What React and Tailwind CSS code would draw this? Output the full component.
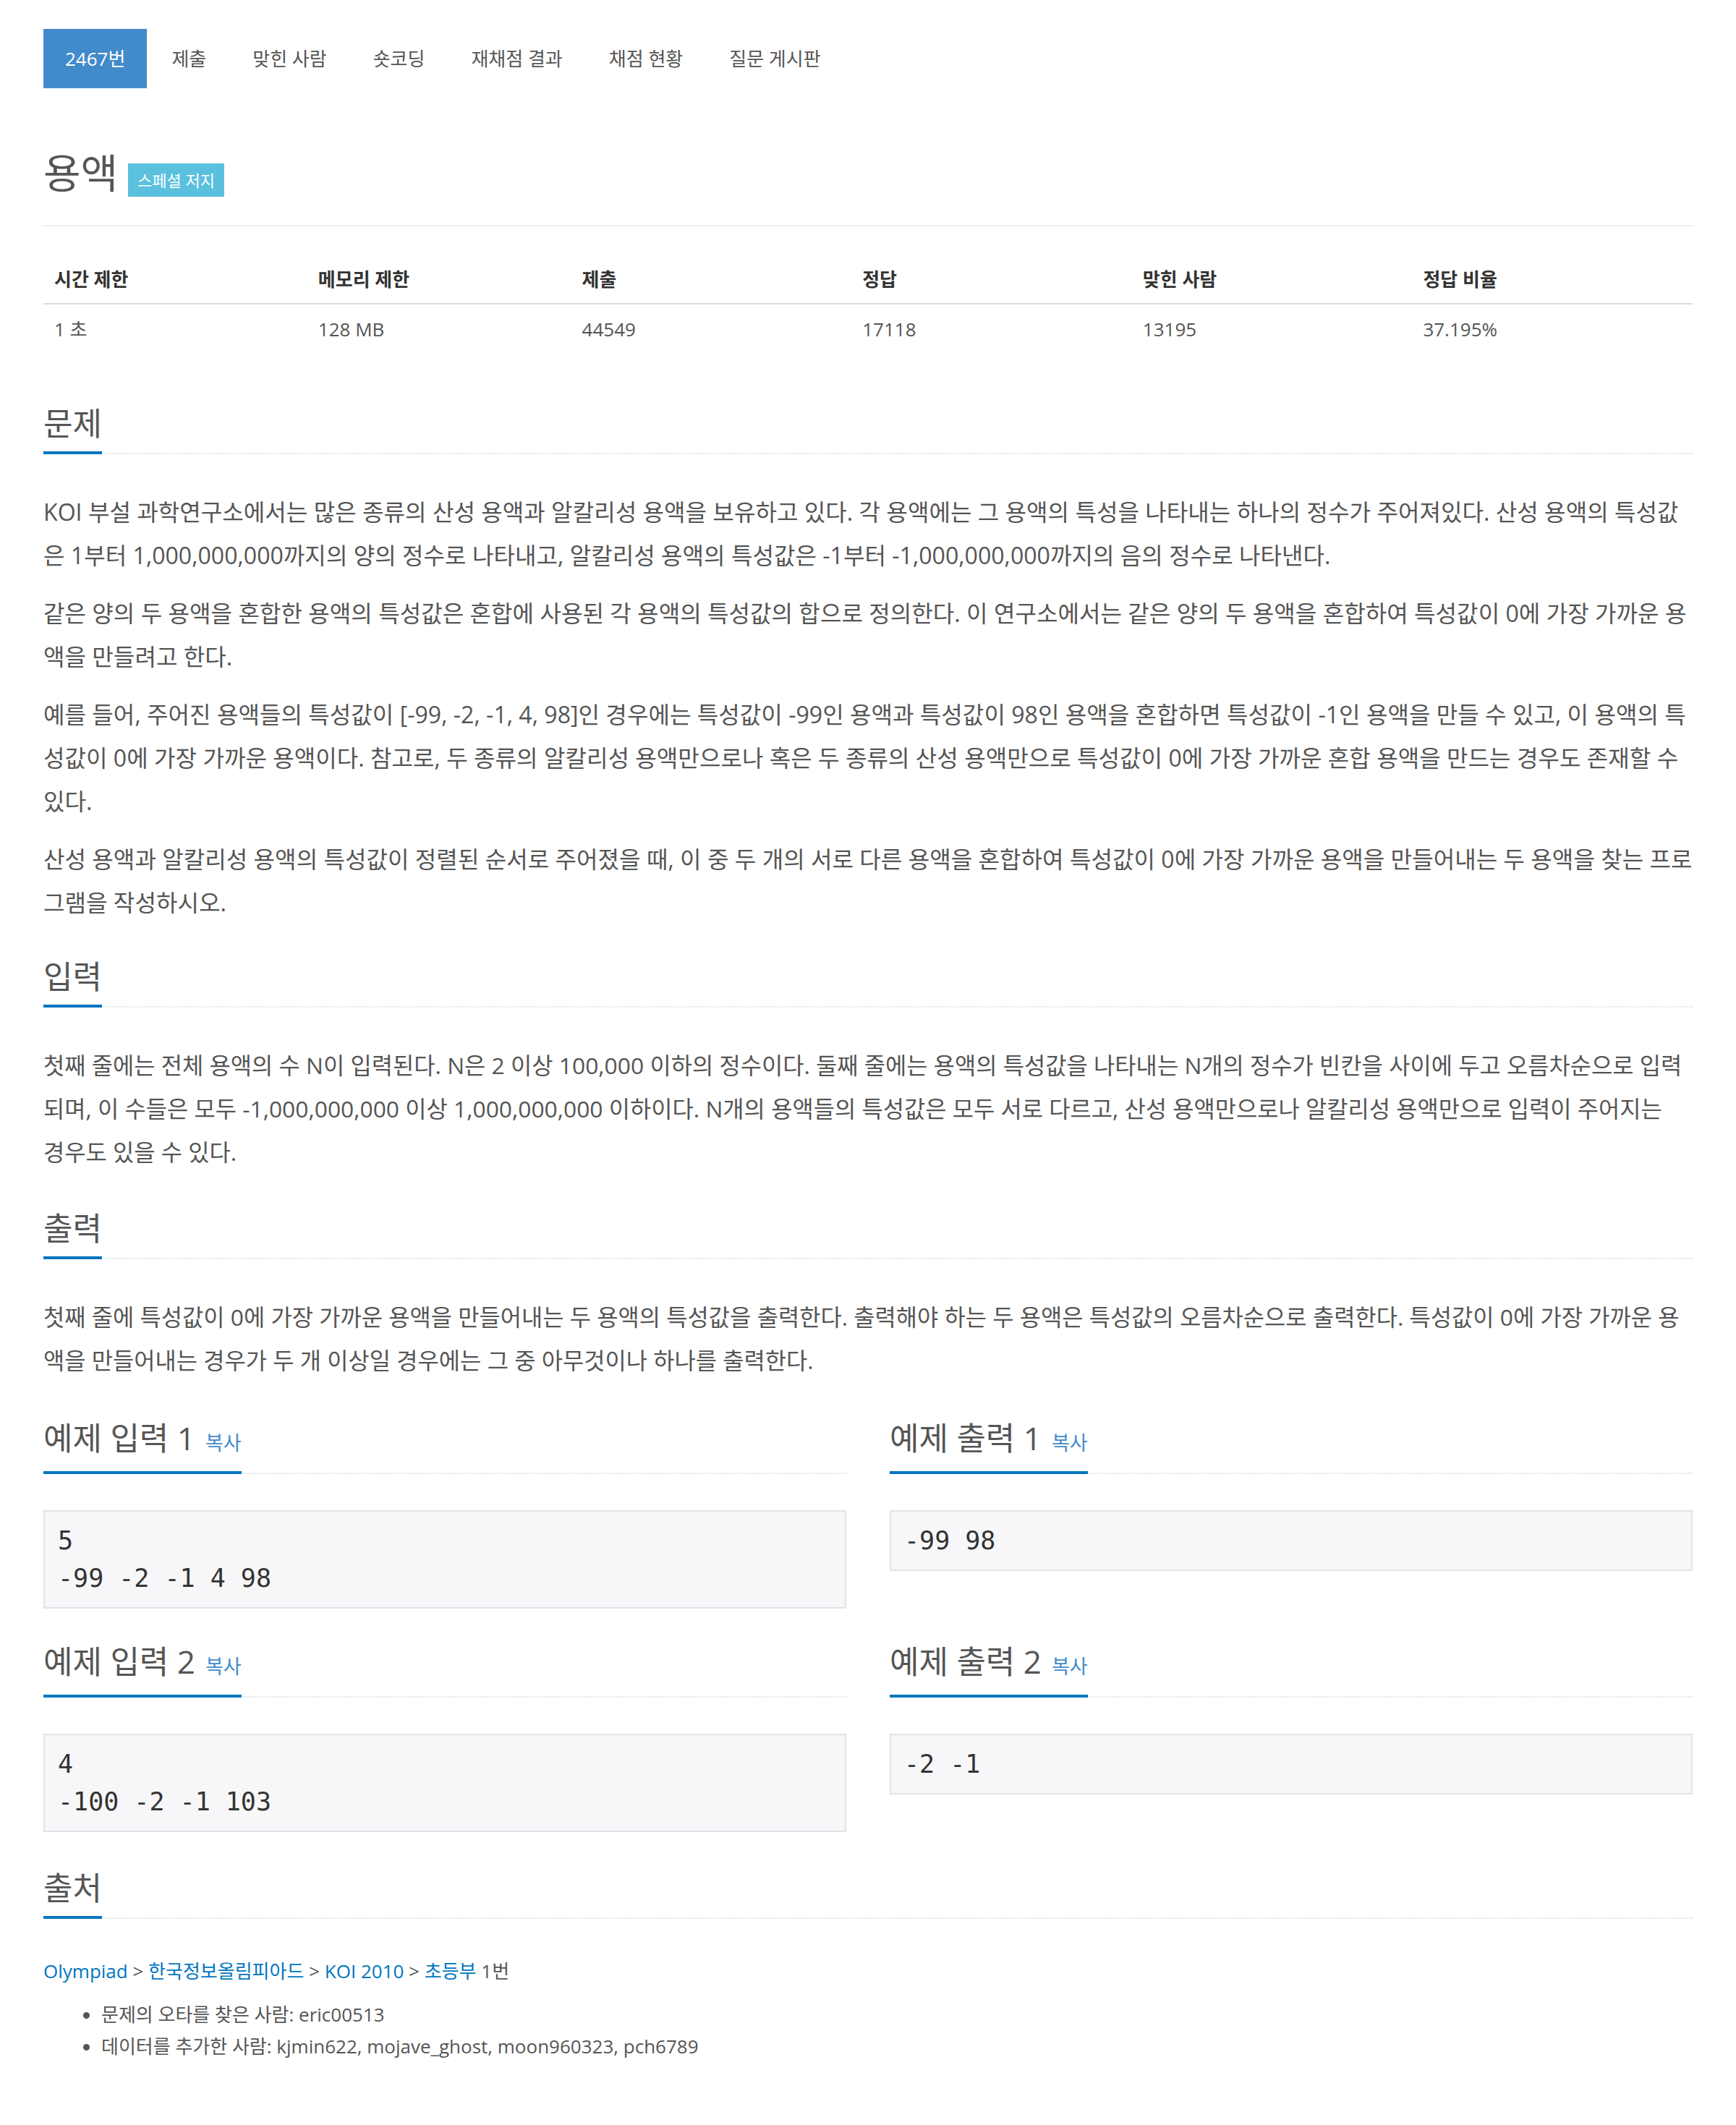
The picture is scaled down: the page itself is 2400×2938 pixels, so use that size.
import React from 'react';

const tabs = ['2467번', '제출', '맞힌 사람', '숏코딩', '재채점 결과', '채점 현황', '질문 게시판'];

const stats = [
  { label: '시간 제한', value: '1 초', width: 'w-[16%]' },
  { label: '메모리 제한', value: '128 MB', width: 'w-[16%]' },
  { label: '제출', value: '44549', width: 'w-[17%]' },
  { label: '정답', value: '17118', width: 'w-[17%]' },
  { label: '맞힌 사람', value: '13195', width: 'w-[17%]' },
  { label: '정답 비율', value: '37.195%', width: 'w-[17%]' },
];

const description = [
  'KOI 부설 과학연구소에서는 많은 종류의 산성 용액과 알칼리성 용액을 보유하고 있다. 각 용액에는 그 용액의 특성을 나타내는 하나의 정수가 주어져있다. 산성 용액의 특성값은 1부터 1,000,000,000까지의 양의 정수로 나타내고, 알칼리성 용액의 특성값은 -1부터 -1,000,000,000까지의 음의 정수로 나타낸다.',
  '같은 양의 두 용액을 혼합한 용액의 특성값은 혼합에 사용된 각 용액의 특성값의 합으로 정의한다. 이 연구소에서는 같은 양의 두 용액을 혼합하여 특성값이 0에 가장 가까운 용액을 만들려고 한다.',
  '예를 들어, 주어진 용액들의 특성값이 [-99, -2, -1, 4, 98]인 경우에는 특성값이 -99인 용액과 특성값이 98인 용액을 혼합하면 특성값이 -1인 용액을 만들 수 있고, 이 용액의 특성값이 0에 가장 가까운 용액이다. 참고로, 두 종류의 알칼리성 용액만으로나 혹은 두 종류의 산성 용액만으로 특성값이 0에 가장 가까운 혼합 용액을 만드는 경우도 존재할 수 있다.',
  '산성 용액과 알칼리성 용액의 특성값이 정렬된 순서로 주어졌을 때, 이 중 두 개의 서로 다른 용액을 혼합하여 특성값이 0에 가장 가까운 용액을 만들어내는 두 용액을 찾는 프로그램을 작성하시오.',
];

const inputText =
  '첫째 줄에는 전체 용액의 수 N이 입력된다. N은 2 이상 100,000 이하의 정수이다. 둘째 줄에는 용액의 특성값을 나타내는 N개의 정수가 빈칸을 사이에 두고 오름차순으로 입력되며, 이 수들은 모두 -1,000,000,000 이상 1,000,000,000 이하이다. N개의 용액들의 특성값은 모두 서로 다르고, 산성 용액만으로나 알칼리성 용액만으로 입력이 주어지는';

const outputText =
  '첫째 줄에 특성값이 0에 가장 가까운 용액을 만들어내는 두 용액의 특성값을 출력한다. 출력해야 하는 두 용액은 특성값의 오름차순으로 출력한다. 특성값이 0에 가장 가까운 용액을 만들어내는 경우가 두 개 이상일 경우에는 그 중 아무것이나 하나를 출력한다.';

const samples = [
  { title: '예제 입력 1', data: '5\n-99 -2 -1 4 98' },
  { title: '예제 출력 1', data: '-99 98' },
  { title: '예제 입력 2', data: '4\n-100 -2 -1 103' },
  { title: '예제 출력 2', data: '-2 -1' },
];

function Headline({ children, className = '' }) {
  return (
    <div className={`flex border-b-2 border-dotted border-[#dfe4ea] mb-[50px] ${className}`}>
      <h2 className="-mb-[2px] border-b-4 border-[#0076c0] pb-[14px] text-[44px] leading-[50px] font-normal text-[#555]">
        {children}
      </h2>
    </div>
  );
}

function Paragraph({ children, size = 'text-[32.1px]' }) {
  return <p className={`mb-[20px] ${size} leading-[60px] text-[#555] break-all`}>{children}</p>;
}

export default function App() {
  return (
    <div className="min-h-screen bg-white px-[60px] pb-[80px] font-['Open_Sans','Noto_Sans_CJK_KR',sans-serif]">
      <ul className="mt-[40px] flex gap-[4px]">
        {tabs.map((t, i) => (
          <li
            key={t}
            className={`flex h-[82px] items-center px-[30px] text-[26px] ${
              i === 0 ? 'bg-[#428bca] text-white' : 'text-[#555]'
            }`}
          >
            {t}
          </li>
        ))}
      </ul>

      <div className="mt-[85px] flex items-start border-b-2 border-[#eee] pb-[39px]">
        <h1 className="text-[56px] leading-[62px] font-normal text-[#555]">용액</h1>
        <span className="ml-[14px] mt-[19px] flex h-[46px] items-center bg-[#5bc0de] px-[13px] text-[22px] text-white">
          스페셜 저지
        </span>
      </div>

      <table className="mt-[40px] w-full table-fixed border-collapse text-left">
        <thead>
          <tr className="border-b-2 border-[#ddd]">
            {stats.map((s) => (
              <th key={s.label} className={`${s.width} px-[15px] py-[15px] text-[26px] leading-[36px] font-bold text-[#333]`}>
                {s.label}
              </th>
            ))}
          </tr>
        </thead>
        <tbody>
          <tr>
            {stats.map((s) => (
              <td key={s.label} className="px-[15px] pt-[16px] pb-[14px] text-[26px] leading-[36px] text-[#555]">
                {s.value}
              </td>
            ))}
          </tr>
        </tbody>
      </table>

      <Headline className="mt-[73px]">문제</Headline>
      {description.map((p, i) => (
        <Paragraph key={i}>{p}</Paragraph>
      ))}

      <Headline className="mt-[47px]">입력</Headline>
      <Paragraph size="text-[31.8px]">
        {inputText}
        <br />
        경우도 있을 수 있다.
      </Paragraph>

      <Headline className="mt-[50px]">출력</Headline>
      <Paragraph size="text-[31.8px]">{outputText}</Paragraph>

      <div className="mt-[52px] grid grid-cols-2 gap-x-[60px] gap-y-[48px]">
        {samples.map((s) => (
          <div key={s.title}>
            <Headline>
              {s.title}
              <span className="ml-[14px] text-[27px] text-[#428bca]">복사</span>
            </Headline>
            <pre className="border-2 border-[#e3e3e8] bg-[#f7f7f9] px-[18px] py-[14px] font-['DejaVu_Sans_Mono',monospace] text-[35px] leading-[52px] text-[#333]">
              {s.data}
            </pre>
          </div>
        ))}
      </div>

      <Headline className="mt-[52px]">출처</Headline>
      <p className="text-[26px] leading-[44px] text-[#555]">
        <a className="text-[#0076c0]">Olympiad</a> &gt; <a className="text-[#0076c0]">한국정보올림피아드</a> &gt;{' '}
        <a className="text-[#0076c0]">KOI 2010</a> &gt; <a className="text-[#0076c0]">초등부</a> 1번
      </p>
      <ul className="mt-[16px] list-disc pl-[80px] text-[26px] leading-[44px] text-[#555]">
        <li>문제의 오타를 찾은 사람: eric00513</li>
        <li>데이터를 추가한 사람: kjmin622, mojave_ghost, moon960323, pch6789</li>
      </ul>
    </div>
  );
}
